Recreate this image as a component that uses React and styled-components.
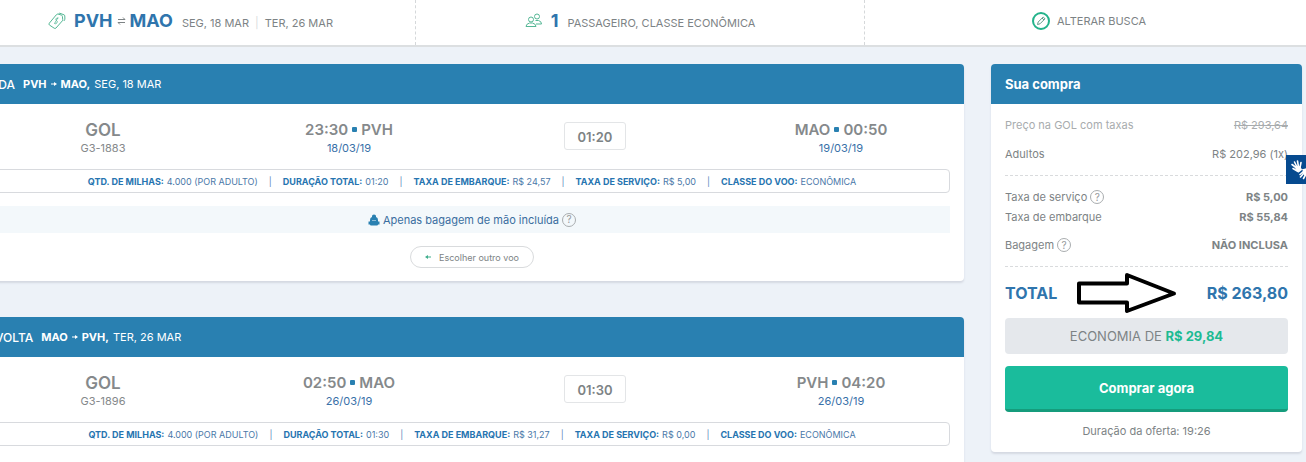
import React from "react";
import styled, { createGlobalStyle } from "styled-components";

const Global = createGlobalStyle`
  * { box-sizing: border-box; }
  body { margin: 0; background: #edf2f8; font-family: Inter, "Liberation Sans", sans-serif; color: #7d8385; font-size: 11px; }
  button { font-family: inherit; cursor: pointer; }
`;
const Page = styled.div`height: 100vh; overflow: hidden;`;

const SearchBar = styled.header`
  display: grid; grid-template-columns: repeat(3, 1fr);
  margin: 0 -7px 0 -34px; height: 47px;
  background: #fff; border-bottom: 2px solid #dcdfe1;
`;
const SearchCell = styled.div`
  display: flex; align-items: center; justify-content: center;
  padding-bottom: 4px; font-size: 11px;
  & + & { border-left: 1px dashed #d5d8da; }
`;
const Route = styled.strong`
  display: flex; align-items: center; gap: 4px; margin: 0 9px 0 8px;
  font-size: 18px; line-height: 22px; font-weight: 700; color: #2f75ad;
`;
const SearchText = styled.span`padding-top: 4px;`;
const Pipe = styled.span`margin: 0 ${(p) => p.$space || 6}px; color: ${(p) => p.$color || "#d9dcde"};`;
const EditLink = styled.a`
  display: flex; align-items: center; gap: 7px; color: inherit; text-decoration: none;
`;

const Columns = styled.main`
  display: grid; grid-template-columns: minmax(0, 1fr) 311px; gap: 27px;
  align-items: start; padding: 17px 4px 0 0;
`;
const Flights = styled.div`display: flex; flex-direction: column; gap: 36px; margin-left: -20px;`;
const Card = styled.section`
  background: #fff; border-radius: 4px; box-shadow: 0 2px 2px #d5d9e2;
`;
const CardHead = styled.h2`
  margin: 0; height: 40px; display: flex; align-items: center; gap: 4px;
  padding: 0 14px; border-radius: 4px 4px 0 0; background: #2980b1;
  color: #fff; font-size: ${(p) => p.$size || 11}px; font-weight: ${(p) => p.$weight || 400};
`;
const Direction = styled.span`font-size: 12px; font-weight: 500; margin: 0 4px 0 1px;`;
const FlightRow = styled.div`
  display: grid; grid-template-columns: repeat(4, 1fr); height: 65px; padding-top: 3px;
  align-items: center; text-align: center;
`;
const Main = styled.div`
  font-size: ${(p) => (p.$large ? 17 : 15)}px; line-height: 20px; font-weight: 600; color: #85898b;
`;
const Dot = styled.span`
  display: inline-block; width: 5px; height: 5px; margin: 0 4px 3px; border-radius: 1px; background: #2980b1;
`;
const Sub = styled.div`font-size: 11px; line-height: 17px; color: ${(p) => (p.$blue ? "#3970a8" : "#85898b")};`;
const Duration = styled.span`
  justify-self: center; width: 62px; height: 28px; line-height: 28px; margin-bottom: 4px;
  border: 1px solid #e3e5e7; border-radius: 3px; font-size: 13px; font-weight: 600;
`;
const Details = styled.div`
  display: flex; align-items: center; justify-content: center; height: 24px; margin: 0 14px;
  border: 1px solid #d8dade; border-radius: 4px; font-size: 9px; color: #4a78a8; white-space: nowrap;
  b { color: #2674b0; margin-right: 3px; }
`;
const Baggage = styled.div`
  display: flex; align-items: center; justify-content: center; gap: 3px;
  height: 27px; margin: 13px 14px; background: #f3f8fb; color: #3a6ea0; font-size: 11px;
`;
const Choose = styled.div`display: flex; justify-content: center; padding-bottom: 13px;`;
const ChooseButton = styled.button`
  height: 22px; width: 124px; display: flex; align-items: center; justify-content: center; gap: 8px;
  padding: 0; border: 1px solid #d9dbdd; border-radius: 11px; background: #fff;
  color: #7d8385; font-size: 9px;
`;
const CardEnd = styled.div`height: 24px;`;
const HelpButton = styled.button`
  width: 14px; height: 14px; padding: 0; border: 1px solid #a9adaf; border-radius: 50%;
  background: transparent; color: #969a9c; font-size: 10px; line-height: 11px;
`;

const SummaryBody = styled.div`padding: 11px 14px;`;
const Line = styled.div`
  display: flex; align-items: center; justify-content: space-between; height: 20px;
  margin-bottom: ${(p) => p.$gap || 0}px; color: ${(p) => (p.$muted ? "#a8acae" : "inherit")};
`;
const Label = styled.span`display: flex; align-items: center; gap: 3px;`;
const Rule = styled.hr`margin: 0 0 11px; border: 0; border-top: 1px dashed #d9dbdd;`;
const Total = styled.div`
  position: relative; display: flex; align-items: center; justify-content: space-between;
  height: 30px; margin-bottom: 10px; font-size: 16px; font-weight: 700; color: #2f75ad;
`;
const Arrow = styled.svg`position: absolute; left: 71px; top: -7px;`;
const Savings = styled.div`
  height: 36px; line-height: 36px; margin-bottom: 12px; text-align: center;
  border-radius: 4px; background: #e5e8ec; font-size: 13px;
  b { color: #1dbb93; }
`;
const Buy = styled.button`
  display: block; width: 100%; height: 46px; margin-bottom: 9px; padding: 0; border: 0;
  border-bottom: 3px solid #159c7c; border-radius: 4px;
  background: #1abc9c; color: #fff; font-size: 13px; font-weight: 700;
`;
const Offer = styled.div`text-align: center; line-height: 20px;`;
const SignButton = styled.button`
  position: fixed; right: 0; top: 155px; width: 20px; height: 29px; padding: 0; border: 0;
  background: #064a8f; overflow: hidden; display: flex;
  svg { flex: none; }
`;

const Help = () => <HelpButton aria-label="Ajuda">?</HelpButton>;

const flights = [
  { dir: "IDA", from: "PVH", to: "MAO", day: "SEG, 18 MAR", code: "G3-1883", dep: "23:30", arr: "00:50", d1: "18/03/19", d2: "19/03/19", dur: "01:20", fee: "R$ 24,57", service: "R$ 5,00", handBaggage: true },
  { dir: "VOLTA", from: "MAO", to: "PVH", day: "TER, 26 MAR", code: "G3-1896", dep: "02:50", arr: "04:20", d1: "26/03/19", d2: "26/03/19", dur: "01:30", fee: "R$ 31,27", service: "R$ 0,00" },
];

const Flight = ({ f }) => {
  const details = [
    ["QTD. DE MILHAS:", "4.000 (POR ADULTO)"],
    ["DURAÇÃO TOTAL:", f.dur],
    ["TAXA DE EMBARQUE:", f.fee],
    ["TAXA DE SERVIÇO:", f.service],
    ["CLASSE DO VOO:", "ECONÔMICA"],
  ];
  return (
    <Card>
      <CardHead>
        <Direction>{f.dir}</Direction>
        <b>{f.from}</b>
        <svg width="6" height="6" viewBox="0 0 6 6" aria-hidden="true"><path d="M0 2.500h3V1l3 2-3 2V3.500H0z" fill="#fff" /></svg>
        <b>{f.to},</b> {f.day}
      </CardHead>
      <FlightRow>
        <div><Main $large>GOL</Main><Sub>{f.code}</Sub></div>
        <div><Main>{f.dep}<Dot />{f.from}</Main><Sub $blue>{f.d1}</Sub></div>
        <Duration>{f.dur}</Duration>
        <div><Main>{f.to}<Dot />{f.arr}</Main><Sub $blue>{f.d2}</Sub></div>
      </FlightRow>
      <Details>
        {details.map(([k, v], i) => (
          <React.Fragment key={k}>
            {i > 0 && <Pipe $space={11} $color="#5d86ba">|</Pipe>}
            <b>{k}</b>{v}
          </React.Fragment>
        ))}
      </Details>
      {f.handBaggage ? (
        <>
          <Baggage>
            <svg width="12" height="12" viewBox="0 0 12 12" aria-hidden="true">
              <path d="M4 3V2q0-1.500 2-1.500T8 2v1q2 .5 2 3v4.500q0 1-1 1H3q-1 0-1-1V6q0-2.500 2-3z" fill="#2980b1" />
              <path d="M1.500 7.500v3M10.500 7.500v3" stroke="#2980b1" strokeWidth="2" /><path d="M4 6.500h4" stroke="#8dbbd6" />
            </svg>
            Apenas bagagem de mão incluída <Help />
          </Baggage>
          <Choose>
            <ChooseButton>
              <svg width="6" height="6" viewBox="0 0 6 6" aria-hidden="true"><path d="M0 3l3-2v1.500h3v1H3V5z" fill="#3fae8c" /></svg>
              Escolher outro voo
            </ChooseButton>
          </Choose>
        </>
      ) : (
        <CardEnd />
      )}
    </Card>
  );
};

export default function App() {
  return (
    <Page>
      <Global />
      <SearchBar>
        <SearchCell>
          <svg width="18" height="18" viewBox="0 0 18 18" fill="none" stroke="#55b795" aria-hidden="true">
            <path d="M1.300 11.200L8.300 2.800q.8-1 1.900-.7l3.200 1q.9.300 1 1.300l.3 3q.1.900-.5 1.600L8 16q-.9.900-1.800.2L1.400 13q-.8-.8-.1-1.800z" />
            <path d="M10.500 2l1.200-.8 4.300 1.600q.8.300.8 1.200l.1 3.200-1 1.800" />
            <path d="M10.300 6.300q-1.800-.9-2.300.5t.7 1.900.2 2.200-2.200.4M10 5.500l-3.600 6.300" strokeWidth=".8" />
          </svg>
          <Route>
            PVH
            <svg width="9" height="8" viewBox="0 0 9 8" fill="none" stroke="#7d8385" aria-hidden="true"><path d="M1 2.500h7M6 .5l2 2M8 5.500H1M3 7.500l-2-2" /></svg>
            MAO
          </Route>
          <SearchText>SEG, 18 MAR<Pipe>|</Pipe>TER, 26 MAR</SearchText>
        </SearchCell>
        <SearchCell>
          <svg width="18" height="15" viewBox="0 0 18 15" fill="none" stroke="#55b795" aria-hidden="true">
            <circle cx="6" cy="6.500" r="2.500" /><path d="M1 13.500q0-2.500 3.500-3.500h3q3.500 1 3.500 3.500z" />
            <circle cx="12" cy="3.500" r="2.500" /><path d="M10.500 7.500h3q3 .8 3 3.500H11" />
          </svg>
          <Route>1</Route>
          <SearchText>PASSAGEIRO, CLASSE ECONÔMICA</SearchText>
        </SearchCell>
        <SearchCell>
          <EditLink href="#busca">
            <svg width="18" height="18" viewBox="0 0 18 18" fill="none" stroke="#24b38b" aria-hidden="true">
              <circle cx="9" cy="9" r="8" strokeWidth="2" /><path d="M5.500 12.500l.7-2.500 5-5 1.800 1.800-5 5zM10 6l2 2" stroke="#5e9a88" />
            </svg>
            ALTERAR BUSCA
          </EditLink>
        </SearchCell>
      </SearchBar>
      <Columns>
        <Flights>{flights.map((f) => <Flight key={f.dir} f={f} />)}</Flights>
        <Card as="aside">
          <CardHead $size={13} $weight={700}>Sua compra</CardHead>
          <SummaryBody>
            <Line $gap={9} $muted><Label>Preço na GOL com taxas</Label><s>R$ 293,64</s></Line>
            <Line $gap={11}><Label>Adultos</Label><span>R$ 202,96 (1x)</span></Line>
            <Rule />
            <Line><Label>Taxa de serviço <Help /></Label><b>R$ 5,00</b></Line>
            <Line $gap={8}><Label>Taxa de embarque</Label><b>R$ 55,84</b></Line>
            <Line $gap={11}><Label>Bagagem <Help /></Label><b>NÃO INCLUSA</b></Line>
            <Rule />
            <Total>
              <span>TOTAL</span>
              <Arrow width="102" height="44" viewBox="0 0 102 44" aria-hidden="true">
                <path d="M3 12.500H51V4L98 22.500 51 40V31.500H3z" fill="#fff" stroke="#000" strokeWidth="4" strokeLinejoin="round" />
              </Arrow>
              <span>R$ 263,80</span>
            </Total>
            <Savings>ECONOMIA DE <b>R$ 29,84</b></Savings>
            <Buy>Comprar agora</Buy>
            <Offer>Duração da oferta: 19:26</Offer>
          </SummaryBody>
        </Card>
      </Columns>
      <SignButton aria-label="Libras">
        <svg width="28" height="29" viewBox="0 0 28 29" fill="none" stroke="#fff" strokeLinecap="round" aria-hidden="true">
          <path d="M9.500 12q3-2 5 .5l1 2.500-3 2q-2.500-1-3-5z" fill="#fff" />
          <path d="M6 9.500l4 3M8.500 7l2.500 5M11.500 6l1 6M15 7.500l-1 5M7 13.500l5 3" strokeWidth="1.600" />
          <path d="M17 14.500q4-1.500 7 0v6h-5q-2-2-2-6z" fill="#fff" />
          <path d="M18 16l-4 3.500M18 18l-3.500 4M20 19l-2.500 4.500" strokeWidth="1.600" />
        </svg>
      </SignButton>
    </Page>
  );
}
